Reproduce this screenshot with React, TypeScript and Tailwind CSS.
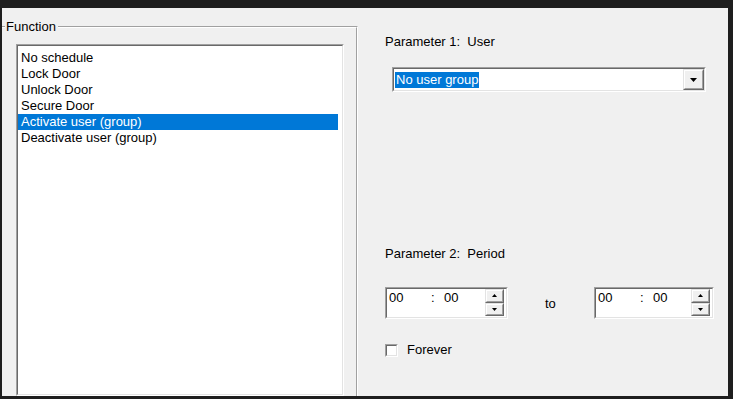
import React from "react";

type BoxProps = { className?: string; innerClassName?: string; children?: React.ReactNode };

const Sunken = ({ className = "", innerClassName = "", children }: BoxProps) => (
  <div className={`border border-t-[#a0a0a0] border-l-[#a0a0a0] border-r-white border-b-white ${className}`}>
    <div className={`h-full border border-t-[#696969] border-l-[#696969] border-r-[#e3e3e3] border-b-[#e3e3e3] bg-white ${innerClassName}`}>
      {children}
    </div>
  </div>
);

const Raised = ({ className = "", children }: BoxProps) => (
  <div className={`border border-t-[#e3e3e3] border-l-[#e3e3e3] border-r-[#696969] border-b-[#696969] bg-[#f0f0f0] ${className}`}>
    <div className="h-full border border-t-white border-l-white border-r-[#a0a0a0] border-b-[#a0a0a0] flex items-center justify-center">
      {children}
    </div>
  </div>
);

const Spin = ({ className = "" }: { className?: string }) => (
  <Sunken className={`h-[32px] ${className}`} innerClassName="flex">
    <div className="flex-1 flex items-start pt-[1px] leading-[16px]">
      <span className="ml-[2px] w-[42px]">00</span>
      <span className="w-[13px]">:</span>
      <span>00</span>
    </div>
    <div className="w-[21px] flex flex-col pr-[2px] pb-[1px]">
      <Raised className="flex-1">
        <svg width="5" height="3" viewBox="0 0 5 3"><path d="M2.5 0 L5 3 L0 3 Z" fill="#000" /></svg>
      </Raised>
      <Raised className="flex-1">
        <svg width="5" height="3" viewBox="0 0 5 3"><path d="M0 0 L5 0 L2.5 3 Z" fill="#000" /></svg>
      </Raised>
    </div>
  </Sunken>
);

const items = [
  "No schedule",
  "Lock Door",
  "Unlock Door",
  "Secure Door",
  "Activate user (group)",
  "Deactivate user (group)",
];

export default function App() {
  return (
    <div
      className="w-[733px] h-[399px] bg-[#1e1e1e] pt-[8px] pl-[2px] pr-[5px] pb-[3px] text-[13px] leading-[16px] text-black"
      style={{ fontFamily: '"Liberation Sans", Arial, sans-serif' }}
    >
      <div className="h-full bg-[#f0f0f0] flex overflow-hidden">
        {/* Left: group box */}
        <div className="w-[356px] pt-[18px] flex flex-col">
          <div className="relative flex-1 border-t border-r border-t-[#a0a0a0] border-r-white flex flex-col">
            <div className="flex-1 border-t border-r border-t-white border-r-[#a0a0a0] flex flex-col pl-[14px] pt-[16px]">
              <Sunken className="w-[328px] flex-1" innerClassName="pt-[4px]">
                {items.map((it, i) => (
                  <div
                    key={it}
                    className={
                      i === 4
                        ? "h-[16px] mr-[4px] pl-[3px] bg-[#0078d7] text-white whitespace-nowrap"
                        : "h-[16px] mr-[4px] pl-[3px] whitespace-nowrap"
                    }
                  >
                    {it}
                  </div>
                ))}
              </Sunken>
            </div>
            <div className="absolute left-[3px] top-[-8px] bg-[#f0f0f0] pl-[1px] pr-[2px]">Function</div>
          </div>
        </div>

        {/* Right panel */}
        <div className="flex-1 flex flex-col pl-[27px]">
          <div className="mt-[26px] h-[16px]">Parameter 1:&nbsp; User</div>
          <Sunken className="mt-[17px] ml-[7px] w-[314px] h-[25px]" innerClassName="flex items-center">
            <div className="flex-1 pl-[1px]">
              <span className="bg-[#0078d7] text-white inline-block h-[16px] pl-[1px] pr-[1px]">No user group</span>
            </div>
            <Raised className="w-[21px] h-[21px]">
              <svg width="7" height="4" viewBox="0 0 7 4"><path d="M0 0 L7 0 L3.5 4 Z" fill="#000" /></svg>
            </Raised>
          </Sunken>

          <div className="mt-[154px] h-[16px]">Parameter 2:&nbsp; Period</div>
          <div className="mt-[25px] flex items-center">
            <Spin className="w-[123px]" />
            <div className="ml-[37px] w-[49px] pt-[1px]">to</div>
            <Spin className="w-[120px]" />
          </div>

          <div className="mt-[23px] flex items-center">
            <Sunken className="w-[13px] h-[13px]" />
            <span className="ml-[9px]">Forever</span>
          </div>
        </div>
      </div>
    </div>
  );
}
